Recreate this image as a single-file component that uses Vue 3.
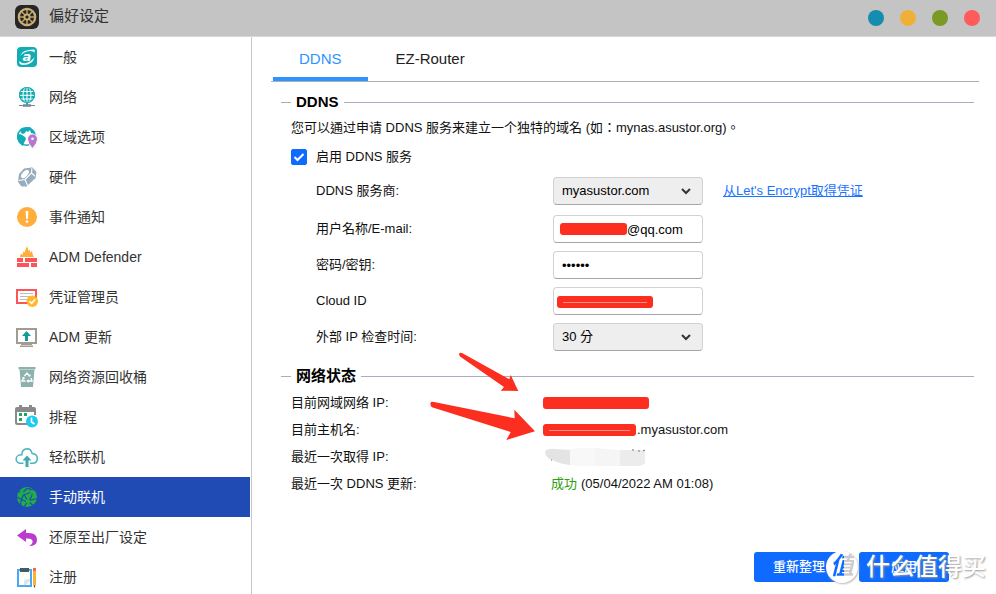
<template>
  <div class="window">
    <header class="titlebar">
      <svg class="icon" viewBox="0 0 24 24">
        <rect width="24" height="24" rx="6" fill="#262626" />
        <g fill="none" stroke="#c9ad72">
          <circle cx="12" cy="12" r="8.2" stroke-width="2.2" />
          <circle cx="12" cy="12" r="2.6" stroke-width="2" />
          <path v-for="a in 8" :key="a" d="M12 9V4.500" stroke-width="1.4" :transform="`rotate(${a * 45} 12 12)`" />
        </g>
        <circle cx="12" cy="12" r="1.3" fill="#262626" />
      </svg>
      <h1>偏好设定</h1>
      <div class="window-buttons">
        <button v-for="b in windowButtons" :key="b" type="button" :class="b" :aria-label="b"></button>
      </div>
    </header>

    <div class="body">
      <nav class="sidebar">
        <a v-for="item in menu" :key="item.id" href="#" :class="{ active: selected === item.id }"
          @click.prevent="selected = item.id">
          <svg class="icon" viewBox="0 0 24 24" v-html="item.icon"></svg>
          <span>{{ item.label }}</span>
        </a>
      </nav>

      <main class="content">
        <div class="tabs" role="tablist">
          <button v-for="t in tabs" :key="t" type="button" role="tab" :class="{ active: tab === t }" @click="tab = t">
            {{ t }}
          </button>
        </div>

        <section class="group">
          <h2>DDNS</h2>
          <p>您可以通过申请 DDNS 服务来建立一个独特的域名 (如：mynas.asustor.org)。</p>
          <label class="enable"><input v-model="enabled" type="checkbox" />启用 DDNS 服务</label>

          <div class="form">
            <div class="row provider">
              <label for="provider">DDNS 服务商:</label>
              <select id="provider">
                <option>myasustor.com</option>
              </select>
              <a href="#" class="cert">从Let's Encrypt取得凭证</a>
            </div>
            <div class="row">
              <label for="user">用户名称/E-mail:</label>
              <div class="field">
                <input id="user" class="masked" type="text" value="@qq.com" />
                <span class="mark mark-user"></span>
              </div>
            </div>
            <div class="row">
              <label for="password">密码/密钥:</label>
              <input id="password" type="password" value="123456" />
            </div>
            <div class="row">
              <label for="cloud">Cloud ID</label>
              <div class="field">
                <input id="cloud" type="text" />
                <span class="mark mark-cloud"></span>
              </div>
            </div>
            <div class="row">
              <label for="interval">外部 IP 检查时间:</label>
              <select id="interval">
                <option>30 分</option>
              </select>
            </div>
          </div>
        </section>

        <section class="group status">
          <h2>网络状态</h2>
          <dl>
            <dt>目前网域网络 IP:</dt>
            <dd><span class="bar bar-ip"></span></dd>
            <dt>目前主机名:</dt>
            <dd><span class="bar bar-host"></span>.myasustor.com</dd>
            <dt>最近一次取得 IP:</dt>
            <dd>
              <svg class="smear" viewBox="0 0 102 20">
                <path d="M0 5Q2 1 10 2L25 3V18Q15 17 7 13Q0 10 0 5Z" fill="#e4e4e4" />
                <path d="M25 2Q40 0 50 1V19Q38 20 25 18Z" fill="#f8f8f8" />
                <path d="M50 1L75 3V19H50Z" fill="#f5f5f5" />
                <path d="M75 3H100V16Q98 19 92 19H75Z" fill="#ececec" />
                <path d="M87 3h2M93 4h2M98 4l2-1M6 13h1" stroke="#777" stroke-width="1" />
              </svg>
            </dd>
            <dt>最近一次 DDNS 更新:</dt>
            <dd><span class="ok">成功</span> (05/04/2022 AM 01:08)</dd>
          </dl>
          <svg class="arrows" viewBox="0 0 108 90" fill="#fc2e20">
            <path d="M29 3.5Q29 1 32 2L79.300 28.300L80.700 24L88.300 40L70.700 39.700L74 36L30 5.500Z" />
            <path d="M.5 52Q1 50 4 51L84.700 67.300L84.300 58.700L105 80.300L76.300 89L80.700 81L2 56.300Q0 55 .5 52Z" />
          </svg>
        </section>

        <footer class="actions">
          <button type="button">重新整理</button>
          <button type="button">应用</button>
          <div class="watermark">
            <span class="badge"><i>值</i></span>
            <span>什么值得买</span>
          </div>
        </footer>
      </main>
    </div>
  </div>
</template>

<script setup>
import { ref } from 'vue'

const windowButtons = ['help', 'minimize', 'maximize', 'close']
const tabs = ['DDNS', 'EZ-Router']

const tab = ref('DDNS')
const selected = ref('manual')
const enabled = ref(true)

const menu = [
  {
    id: 'general',
    label: '一般',
    icon: `<rect x="2" y="2" width="20" height="20" rx="4" fill="#12acb5"/>
      <text x="7.500" y="16" fill="#fff" font-family="DejaVu Sans" font-size="13" font-weight="bold" font-style="italic">a</text>
      <path d="M5 11.500Q6.500 4.500 19 4.500Q20.500 5 19.500 7.500Q18.500 5.800 15 6Q8 6.500 5 11.500Z" fill="#fff"/>
      <path d="M19.500 12Q18 20 7.500 20Q3.500 19.500 4.500 16Q6 18.500 10 18.200Q16 17.500 19.500 12Z" fill="#fff"/>`
  },
  {
    id: 'network',
    label: '网络',
    icon: `<circle cx="12" cy="10" r="8" fill="#12acb5"/>
      <path d="M12 2v16M5 6.500h14M4 10.300h16M5 14h14" stroke="#fff" fill="none"/>
      <ellipse cx="12" cy="10" rx="4" ry="8" stroke="#fff" fill="none"/>
      <circle cx="12" cy="10" r="7.500" fill="none" stroke="#12acb5"/>
      <path d="M4 20.500h16" stroke="#74879b"/><path d="M8 20.500h8" stroke="#74879b" stroke-width="2.500"/>
      <path d="M12 18v2" stroke="#74879b" stroke-width="2"/>`
  },
  {
    id: 'region',
    label: '区域选项',
    icon: `<circle cx="11.500" cy="11.500" r="8.800" fill="#fff" stroke="#12acb5" stroke-width="1.400"/>
      <path d="M10 2Q3 4 2 10L5 9L7 10L10 12L11 14L9 18L8 21Q2 18 2 11Q2 4 10 2ZM7 3L15 2L20 7L19 9L16 8L15 5L13 7L11 6L10 8L8 9L6 8L5 5Z" fill="#12acb5"/>
      <path d="M17.500 23.500Q12.500 18 12.500 14A5 5 0 0 1 22.500 14Q22.500 18 17.500 23.500Z" fill="#b876cf" stroke="#fff" stroke-width=".8"/>
      <circle cx="17.500" cy="13.800" r="1.300" fill="#fff"/>`
  },
  {
    id: 'hardware',
    label: '硬件',
    icon: `<path d="M9 3.500L17 2.500L21 7L20 13.500L12 21L6.500 21L3 16L4 9Z" fill="#97acbd"/>
      <path d="M3.500 15.500L10 14.500L16.500 8L17 3M10 14.500L12.500 20.500M16.500 8L21 12" stroke="#fff" stroke-width="1.100" fill="none"/>
      <ellipse cx="10" cy="9" rx="5" ry="2.700" transform="rotate(-48 10 9)" fill="#fff"/>
      <path d="M17 2.500L21 7L20 13.500M3 16L6.500 21H12" stroke="#97acbd" fill="none"/>`
  },
  {
    id: 'events',
    label: '事件通知',
    icon: `<circle cx="12" cy="12" r="10" fill="#ffae3b"/>
      <path d="M10.600 6H13.400L12.900 14H11.100Z" fill="#fff"/><circle cx="12" cy="16.600" r="1.300" fill="#fff"/>`
  },
  {
    id: 'defender',
    label: 'ADM Defender',
    icon: `<path d="M5 12Q5 10 6.500 8.500L7.500 10L8.500 6L9.500 7.500L12 1L13.500 6L14.500 4.500L15.500 8L17 5.500Q17 9 19 12Z" fill="#ffae3b"/>
      <path d="M2 13h6v4H2zM10 13h12v4H10zM2 18h12v4H2zM16 18h6v4h-6z" fill="#fc5457"/>`
  },
  {
    id: 'certificate',
    label: '凭证管理员',
    icon: `<rect x="2" y="5" width="19" height="13" fill="#fff" stroke="#fc5457" stroke-width="2"/>
      <path d="M5 8.500h13M5 11.500h12M5 14.500h7" stroke="#bbb"/>
      <circle cx="17.300" cy="16.300" r="5.700" fill="#ffb92a"/>
      <path d="M14.500 16.300L16.600 18.400L20.300 14.200" fill="none" stroke="#fff" stroke-width="1.500"/>`
  },
  {
    id: 'update',
    label: 'ADM 更新',
    icon: `<rect x="2" y="4" width="19" height="14" fill="#fff" stroke="#a39b93" stroke-width="2"/>
      <path d="M6 18.500h11v1.500H6zM5 20.500h13V22H5z" fill="#a39b93"/>
      <path d="M11.500 6L16 11H13V16H10V11H7Z" fill="#149a9c"/>`
  },
  {
    id: 'recycle',
    label: '网络资源回收桶',
    icon: `<path d="M3.500 2h17v2h-17zM4.500 4h15L18 22H6Z" fill="#8db2ae"/>
      <path d="M4 4.500h16" stroke="#b4cfcc"/>
      <path d="M9.500 11L12 8L14.500 11M16 13L17 16H13M10.500 16H7L8.500 13" fill="none" stroke="#fff" stroke-width="1.400"/>
      <path d="M13 11.500h2.500V9zM13.500 14v4l-2.200-2zM7 12.500l2.200-.8 1 2.200z" fill="#fff"/>`
  },
  {
    id: 'schedule',
    label: '排程',
    icon: `<path d="M1 7V17.500Q1 19 2.500 19H12M20 7V10" fill="none" stroke="#8a8a8a" stroke-width="2"/>
      <path d="M0 4Q0 2 2 2H4V0H7V2H14V0H17V2H19Q21 2 21 4V7H0Z" fill="#8a8a8a"/>
      <path d="M4 8h3v3H4zM9 8h3v3H9zM4 13h3v3H4z" fill="#18a85f"/>
      <circle cx="17" cy="16.500" r="6" fill="#1fc9f0"/>
      <path d="M16.500 12.500V17L19.500 19" fill="none" stroke="#fff" stroke-width="1.600"/>`
  },
  {
    id: 'ezconnect',
    label: '轻松联机',
    icon: `<path d="M8.500 18.200H5.500A4 4 0 0 1 5 10Q5.800 9.600 6.800 9.800Q7 4 12.200 3.800Q16 3.800 17.200 8.600Q22.300 9 22.300 13.600Q22 17.700 18.500 18.200H15" fill="none" stroke="#4bb5bd" stroke-width="1.500"/>
      <path d="M12 10.500L16.500 15.500H13.500V22H10.500V15.500H7.500Z" fill="#3fa9b0"/>`
  },
  {
    id: 'manual',
    label: '手动联机',
    icon: `<circle cx="12" cy="12" r="10" fill="#22ac4a"/>
      <path d="M3 6L7 8L12 3.500L19 5M7 8L9 9.500Q14 9 16 6L15 3M9 9.500Q6 13 5.500 20M9 9.500L13 16M16 6Q19 11 13 16L22 13.500M13 16L9 22M13 16L18 20.500M2 12L6.500 14.500L12 17" fill="none" stroke="#204bb4" stroke-width="1.200"/>
      <circle cx="7" cy="8" r="1.900" fill="#22ac4a"/><circle cx="13" cy="16.300" r="2.200" fill="#22ac4a"/><circle cx="16.500" cy="7" r="1.700" fill="#22ac4a"/>`
  },
  {
    id: 'factory',
    label: '还原至出厂设定',
    icon: `<path d="M2 10.500L11 4V8H14Q22 8 22 15Q22 21 14 21Q18 19 17.500 16Q17 13.500 13 13.500H11V17Z" fill="#b83dcd"/>`
  },
  {
    id: 'register',
    label: '注册',
    icon: `<rect x="3" y="5" width="13" height="16" fill="#fff" stroke="#49a9f5" stroke-width="2"/>
      <path d="M5 3h9v4H5z" fill="#455a64"/><path d="M9 20V16L11 14H15V16L11 20Z" fill="#dfe5e9"/>
      <path d="M18 5h3v14L19.500 23L18 19Z" fill="#f9b233"/><path d="M18 3h3v3H18z" fill="#ed6a5a"/>
      <path d="M18.700 20.500h1.600L19.500 23Z" fill="#333"/>`
  }
]
</script>

<style>
body {
  margin: 0;
  background: #fff;
}
</style>

<style scoped>
.window {
  display: flex;
  flex-direction: column;
  height: 100vh;
  overflow: hidden;
  background: #fff;
  color: #111;
  font-family: "Liberation Sans", "Noto Sans CJK TC", sans-serif;
  font-size: 13px;
  line-height: 20px;
}

button,
input,
select {
  font: inherit;
}

.icon {
  flex: none;
  width: 24px;
  height: 24px;
}

.titlebar {
  display: flex;
  flex: none;
  align-items: center;
  gap: 10px;
  height: 36px;
  padding: 0 16px 0 15px;
  border-bottom: 1px solid #d8d8d8;
  background: #c4c4c4;
}

.titlebar .icon {
  margin-bottom: 2px;
}

.titlebar h1 {
  margin: 0;
  padding-bottom: 4px;
  color: #333;
  font-size: 15px;
  font-weight: 400;
}

.window-buttons {
  display: flex;
  gap: 16px;
  margin-left: auto;
}

.window-buttons button {
  width: 16px;
  height: 16px;
  padding: 0;
  border: 0;
  border-radius: 50%;
}

.help {
  background: #148dae;
}

.minimize {
  background: #efb038;
}

.maximize {
  background: #7a9a25;
}

.close {
  background: #ff5b5b;
}

.body {
  display: flex;
  flex: 1;
  min-height: 0;
}

.sidebar {
  flex: none;
  width: 250px;
  padding-right: 1px;
  border-right: 1px solid #c6c6cc;
  overflow: hidden;
}

.sidebar a {
  display: flex;
  align-items: center;
  gap: 10px;
  height: 40px;
  padding-left: 15px;
  color: #333;
  font-size: 14px;
  text-decoration: none;
}

.sidebar a.active {
  background: #204bb4;
  color: #fff;
}

.content {
  display: flex;
  flex: 1;
  flex-direction: column;
  min-width: 0;
  padding: 0 17px 0 19px;
}

.tabs {
  display: flex;
  gap: 2px;
  height: 44px;
  padding-left: 2px;
  border-bottom: 1px solid #b0b0b0;
}

.tabs button {
  padding: 4px 26px 0;
  border: 0;
  border-bottom: 4px solid transparent;
  background: none;
  color: #222;
  font-size: 15px;
}

.tabs button.active {
  border-color: #2e93ff;
  color: #2e93ff;
}

.group {
  position: relative;
  margin: 10px 5px 0 10px;
}

.group h2 {
  display: flex;
  align-items: center;
  gap: 5px;
  margin: 0;
  color: #000;
  font-size: 15px;
  font-weight: 700;
}

.group h2::before,
.group h2::after {
  width: 10px;
  height: 1px;
  background: #a9adbe;
  content: "";
}

.group h2::after {
  flex: 1;
}

.group p {
  margin: 6px 0 0 10px;
}

.enable {
  display: flex;
  align-items: center;
  gap: 9px;
  margin: 9px 0 0 10px;
}

.enable input {
  appearance: none;
  width: 16px;
  height: 16px;
  margin: 0;
  border: 1px solid #0f6bff;
  border-radius: 2px;
}

.enable input:checked {
  background: #0f6bff url("data:image/svg+xml,%3Csvg xmlns='http://www.w3.org/2000/svg' viewBox='0 0 14 14'%3E%3Cpath d='M2.500 7L5.500 10L11.500 4' fill='none' stroke='white' stroke-width='2'/%3E%3C/svg%3E") center / 14px no-repeat;
}

.form {
  display: flex;
  flex-direction: column;
  gap: 8px;
  margin: 10px 0 0 35px;
}

.row {
  display: flex;
  align-items: center;
  height: 28px;
}

.row.provider {
  margin-bottom: 2px;
}

.row label {
  width: 237px;
}

.row select,
.row input {
  width: 150px;
  height: 28px;
  box-sizing: border-box;
  padding: 0 8px;
  border: 1px solid #d2d2d2;
  border-bottom-color: #a6a6a6;
  border-radius: 4px;
  background: #fff;
  color: #000;
}

.row select {
  appearance: none;
  background: #eee url("data:image/svg+xml,%3Csvg xmlns='http://www.w3.org/2000/svg' viewBox='0 0 12 12'%3E%3Cpath d='M2 4L6 8L10 4' fill='none' stroke='%23333' stroke-width='2'/%3E%3C/svg%3E") right 10px center / 12px no-repeat;
}

.row #password {
  font-size: 13px;
}

.row .masked {
  padding-left: 73px;
}

.field {
  position: relative;
}

.mark,
.bar {
  border-radius: 3px;
  background: #fc2e20;
}

.mark {
  position: absolute;
  height: 12px;
}

.mark-user {
  top: 8px;
  left: 7px;
  width: 67px;
}

.mark-cloud {
  top: 9px;
  left: 4px;
  width: 96px;
}

.mark-cloud::after,
.bar-host::after {
  display: block;
  height: 1px;
  margin: 6px 6px 0;
  background: #ff8d84;
  content: "";
}

.cert {
  margin-left: 20px;
  color: #1a73ff;
}

.status {
  margin-top: 15px;
}

dl {
  display: grid;
  grid-template-columns: 252px 1fr;
  grid-auto-rows: 27px;
  align-items: center;
  margin: 3px 0 0 10px;
}

dd {
  display: flex;
  align-items: center;
  margin: 0;
}

.bar {
  width: 106px;
  height: 12px;
}

.bar-host {
  width: 93px;
  margin-right: 1px;
}

.smear {
  width: 102px;
  height: 20px;
  margin-left: 2px;
}

.ok {
  margin: 0 4px 0 8px;
  color: #2ba00d;
}

.arrows {
  position: absolute;
  top: -15px;
  left: 149px;
  width: 108px;
  height: 90px;
}

.actions {
  position: relative;
  display: flex;
  justify-content: flex-end;
  gap: 15px;
  margin: auto 30px 12px 0;
}

.actions button {
  width: 90px;
  height: 30px;
  padding: 0;
  border: 0;
  border-radius: 3px;
  background: #0f6bff;
  color: #fff;
  font-weight: 500;
}

.watermark {
  position: absolute;
  right: -37px;
  bottom: -2px;
  display: flex;
  align-items: center;
  gap: 8px;
  height: 34px;
  color: #fff;
  font-size: 24px;
  font-weight: 500;
  text-shadow: 1px 1px 2px #999;
  white-space: nowrap;
  pointer-events: none;
}

.badge {
  width: 32px;
  height: 32px;
  border-radius: 50%;
  background: #fff;
  box-shadow: 1px 1px 2px #bbb;
  line-height: 30px;
  text-align: center;
  text-shadow: none;
}

.badge i {
  background: linear-gradient(90deg, #0f6bff 60%, #ccc 60%);
  background-clip: text;
  color: transparent;
  font-weight: 700;
}
</style>
